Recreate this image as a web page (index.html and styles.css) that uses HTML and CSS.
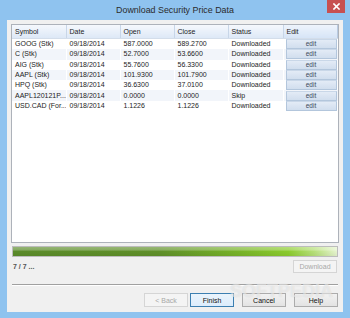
FILE: index.html
```html
<!DOCTYPE html>
<html lang="en">
<head>
    <meta charset="UTF-8">
    <title>Download Security Price Data</title>
    <link rel="stylesheet" href="styles.css">
</head>
<body>
    <div class="window">
        <!-- Title bar -->
        <div class="titlebar">
            <div class="title-spacer"></div>
            <div class="title">Download Security Price Data</div>
            <div class="close-btn">
                <svg width="7" height="7" viewBox="0 0 7 7">
                    <path d="M1 1 L6 6 M6 1 L1 6" stroke="#ffffff" stroke-width="1.6" stroke-linecap="square"/>
                </svg>
            </div>
        </div>

        <div class="client">
            <!-- Price list -->
            <div class="listview">
                <table class="prices">
                    <colgroup>
                        <col class="col-std">
                        <col class="col-std">
                        <col class="col-std">
                        <col class="col-std">
                        <col class="col-wide">
                        <col>
                    </colgroup>
                    <thead>
                        <tr>
                            <th>Symbol</th>
                            <th>Date</th>
                            <th>Open</th>
                            <th>Close</th>
                            <th>Status</th>
                            <th>Edit</th>
                        </tr>
                    </thead>
                    <tbody>
                        <tr>
                            <td>GOOG (Stk)</td><td>09/18/2014</td><td>587.0000</td><td>589.2700</td><td>Downloaded</td>
                            <td><span class="edit-btn">edit</span></td>
                        </tr>
                        <tr class="alt">
                            <td>C (Stk)</td><td>09/18/2014</td><td>52.7000</td><td>53.6600</td><td>Downloaded</td>
                            <td><span class="edit-btn">edit</span></td>
                        </tr>
                        <tr>
                            <td>AIG (Stk)</td><td>09/18/2014</td><td>55.7600</td><td>56.3300</td><td>Downloaded</td>
                            <td><span class="edit-btn">edit</span></td>
                        </tr>
                        <tr class="alt">
                            <td>AAPL (Stk)</td><td>09/18/2014</td><td>101.9300</td><td>101.7900</td><td>Downloaded</td>
                            <td><span class="edit-btn">edit</span></td>
                        </tr>
                        <tr>
                            <td>HPQ (Stk)</td><td>09/18/2014</td><td>36.6300</td><td>37.0100</td><td>Downloaded</td>
                            <td><span class="edit-btn">edit</span></td>
                        </tr>
                        <tr class="alt">
                            <td>AAPL120121P...</td><td>09/18/2014</td><td>0.0000</td><td>0.0000</td><td>Skip</td>
                            <td><span class="edit-btn">edit</span></td>
                        </tr>
                        <tr>
                            <td>USD.CAD (For...</td><td>09/18/2014</td><td>1.1226</td><td>1.1226</td><td>Downloaded</td>
                            <td><span class="edit-btn">edit</span></td>
                        </tr>
                    </tbody>
                </table>
            </div>

            <!-- Progress -->
            <div class="progress">
                <div class="progress-fill"></div>
            </div>

            <div class="status-row">
                <span class="count">7 / 7 ...</span>
                <span class="btn btn-disabled btn-download">Download</span>
            </div>

            <div class="separator"></div>

            <div class="button-row">
                <span class="btn btn-disabled">&lt; Back</span>
                <span class="btn btn-default">Finish</span>
                <span class="btn btn-gap">Cancel</span>
                <span class="btn btn-gap">Help</span>
            </div>

            <div class="watermark">SOFTPEDIA</div>
        </div>
    </div>
</body>
</html>
```

FILE: styles.css
```css
body {
    margin: 0;
    padding: 0;
    background-color: #ffffff;
    font-family: "Liberation Sans", Arial, sans-serif;
    overflow: hidden;
}

.window {
    width: 350px;
    height: 318px;
    background-color: #8fc3ef;
    display: flex;
    flex-direction: column;
    box-sizing: border-box;
}

.titlebar {
    height: 20px;
    display: flex;
    flex-direction: row;
}

.title-spacer {
    flex: 0 0 23px;
}

.title {
    flex: 1;
    text-align: center;
    font-size: 8.9px;
    line-height: 20px;
    color: #2b2b2b;
}

.close-btn {
    flex: 0 0 18px;
    height: 13px;
    margin-right: 5px;
    background-color: #c75050;
    display: flex;
    justify-content: center;
    align-items: center;
}

.client {
    position: relative;
    flex: 1;
    margin: 0 7px 6px 7px;
    padding: 4px 4px 0 4px;
    background-color: #f0f0f0;
    display: flex;
    flex-direction: column;
    overflow: hidden;
}

/* List view */
.listview {
    height: 219px;
    box-sizing: border-box;
    border: 1px solid #adb2ba;
    background-color: #ffffff;
}

.prices {
    width: 100%;
    table-layout: fixed;
    border-collapse: collapse;
    font-size: 7px;
    color: #1c1c1c;
}

.col-std {
    width: 54px;
}

.col-wide {
    width: 55px;
}

.prices th {
    height: 13px;
    padding: 0 3px;
    text-align: left;
    font-weight: normal;
    background: linear-gradient(#f5f8fd, #dde8f6);
    border-right: 1px solid #c8d6e8;
    border-bottom: 1px solid #d3ddea;
    white-space: nowrap;
    overflow: hidden;
}

.prices th:last-child {
    border-right: 1px solid #b9cbe2;
    background: linear-gradient(#eef4fc, #d6e4f6);
}

.prices td {
    height: 10.3px;
    padding: 0 0 0 3px;
    white-space: nowrap;
    overflow: hidden;
    line-height: 10px;
    border-right: 1px solid #ffffff;
}

.prices tr.alt td {
    background-color: #f2f5fa;
}

.prices td:last-child {
    padding: 0 1px 0 2px;
    border-right: none;
}

.edit-btn {
    display: block;
    height: 8px;
    line-height: 8px;
    text-align: center;
    font-size: 6.5px;
    color: #3c4a5c;
    background: linear-gradient(#e3ebf6, #d1deee);
    border: 1px solid #b3c6dc;
    border-top-color: #c9d7e8;
}

/* Progress bar */
.progress {
    margin: 3px 1px 0 1px;
    height: 11px;
    box-sizing: border-box;
    border: 1px solid #bcbcbc;
    background-color: #e6e6e6;
}

.progress-fill {
    height: 100%;
    background:
        linear-gradient(rgba(255, 255, 255, 0.35) 0%, rgba(255, 255, 255, 0.25) 35%, rgba(0, 0, 0, 0) 45%, rgba(0, 0, 0, 0.05) 100%),
        linear-gradient(90deg, #5b8c2a 0%, #5f9029 45%, #78b428 70%, #8ccc2e 85%, #b7e07a 93%, #e6f4cf 100%);
}

.status-row {
    margin-top: 3px;
    height: 13px;
    padding: 0 2px;
    display: flex;
    justify-content: space-between;
    align-items: center;
}

.count {
    font-size: 7px;
    font-weight: bold;
    color: #555555;
}

.btn {
    width: 44px;
    height: 14px;
    box-sizing: border-box;
    display: flex;
    justify-content: center;
    align-items: center;
    font-size: 7px;
    color: #111111;
    border: 1px solid #acacac;
    background: linear-gradient(#f2f2f2, #e3e3e3);
}

.btn-download {
    height: 13px;
}

.btn-disabled {
    color: #a8a8a8;
    border-color: #d5d5d5;
    background: #f4f4f4;
}

.btn-default {
    margin-left: 2px;
    border-color: #3c7fb1;
    background: linear-gradient(#eaf4fc, #dcecfc);
}

.btn-gap {
    margin-left: 8px;
}

.separator {
    margin: 11px 1px 0 1px;
    height: 0;
    border-top: 1px solid #a0a0a0;
    border-bottom: 1px solid #ffffff;
}

.button-row {
    margin-top: 7px;
    padding-right: 1px;
    display: flex;
    justify-content: flex-end;
}

/* faint site watermark over the buttons */
.watermark {
    position: absolute;
    left: 223px;
    top: 261px;
    font-size: 18px;
    font-weight: bold;
    color: rgba(255, 255, 255, 0.45);
    text-shadow: 0 0 1px rgba(160, 160, 160, 0.35);
    pointer-events: none;
}
```
